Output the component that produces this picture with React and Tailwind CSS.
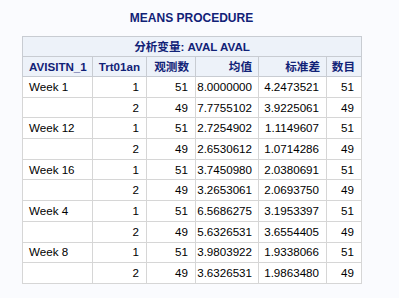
const rows = [
  ["Week 1", 1, 51, "8.0000000", "4.2473521", 51],
  ["", 2, 49, "7.7755102", "3.9225061", 49],
  ["Week 12", 1, 51, "2.7254902", "1.1149607", 51],
  ["", 2, 49, "2.6530612", "1.0714286", 49],
  ["Week 16", 1, 51, "3.7450980", "2.0380691", 51],
  ["", 2, 49, "3.2653061", "2.0693750", 49],
  ["Week 4", 1, 51, "6.5686275", "3.1953397", 51],
  ["", 2, 49, "5.6326531", "3.6554405", 49],
  ["Week 8", 1, 51, "3.9803922", "1.9338066", 51],
  ["", 2, 49, "3.6326531", "1.9863480", 49],
]

const font = { fontFamily: '"Liberation Sans", Arial, "Noto Sans CJK SC", sans-serif' }

const th = "border border-[#c8ccd2] pl-[2px] pr-[6px] py-0 font-bold whitespace-nowrap overflow-hidden"
const td = "border border-[#d6d6d6] pl-[1px] pr-[7px] py-0 text-right whitespace-nowrap overflow-hidden"

export default function App() {
  return (
    <div className="min-h-screen bg-[#fafbfe] pl-[22px]" style={font}>
      <div className="w-[339px]">
        <div className="pt-[11px] h-[36px] text-center text-[12px] font-bold text-[#112277] leading-[14px]">
          MEANS PROCEDURE
        </div>
        <table className="w-[339px] table-fixed border-collapse text-[11.6px] leading-[14px] text-black">
          <colgroup>
            <col className="w-[70px]" />
            <col className="w-[54px]" />
            <col className="w-[49px]" />
            <col className="w-[63px]" />
            <col className="w-[68px]" />
            <col className="w-[35px]" />
          </colgroup>
          <thead className="bg-[#edf2f9] text-[#112277]">
            <tr className="h-[20px]">
              <th colSpan={6} className="border border-[#c8ccd2] p-0 text-center font-bold whitespace-nowrap">
                分析变量: AVAL AVAL
              </th>
            </tr>
            <tr className="h-[20px]">
              <th className="border border-[#c8ccd2] px-[6px] py-0 text-left font-bold whitespace-nowrap overflow-hidden">AVISITN_1</th>
              <th className={th + " text-right"}>Trt01an</th>
              <th className={th + " text-right"}>观测数</th>
              <th className={th + " text-right"}>均值</th>
              <th className={th + " text-right"}>标准差</th>
              <th className={th + " text-right"}>数目</th>
            </tr>
          </thead>
          <tbody className="bg-white">
            {rows.map((r, i) => (
              <tr key={i} className="h-[20.7px]">
                <td className="border border-[#d6d6d6] px-[6px] py-0 text-left whitespace-nowrap">{r[0]}</td>
                <td className={td}>{r[1]}</td>
                <td className={td}>{r[2]}</td>
                <td className="border border-[#d6d6d6] pl-[1px] pr-[6px] py-0 text-right whitespace-nowrap overflow-hidden">{r[3]}</td>
                <td className={td}>{r[4]}</td>
                <td className={td}>{r[5]}</td>
              </tr>
            ))}
          </tbody>
        </table>
      </div>
    </div>
  )
}
